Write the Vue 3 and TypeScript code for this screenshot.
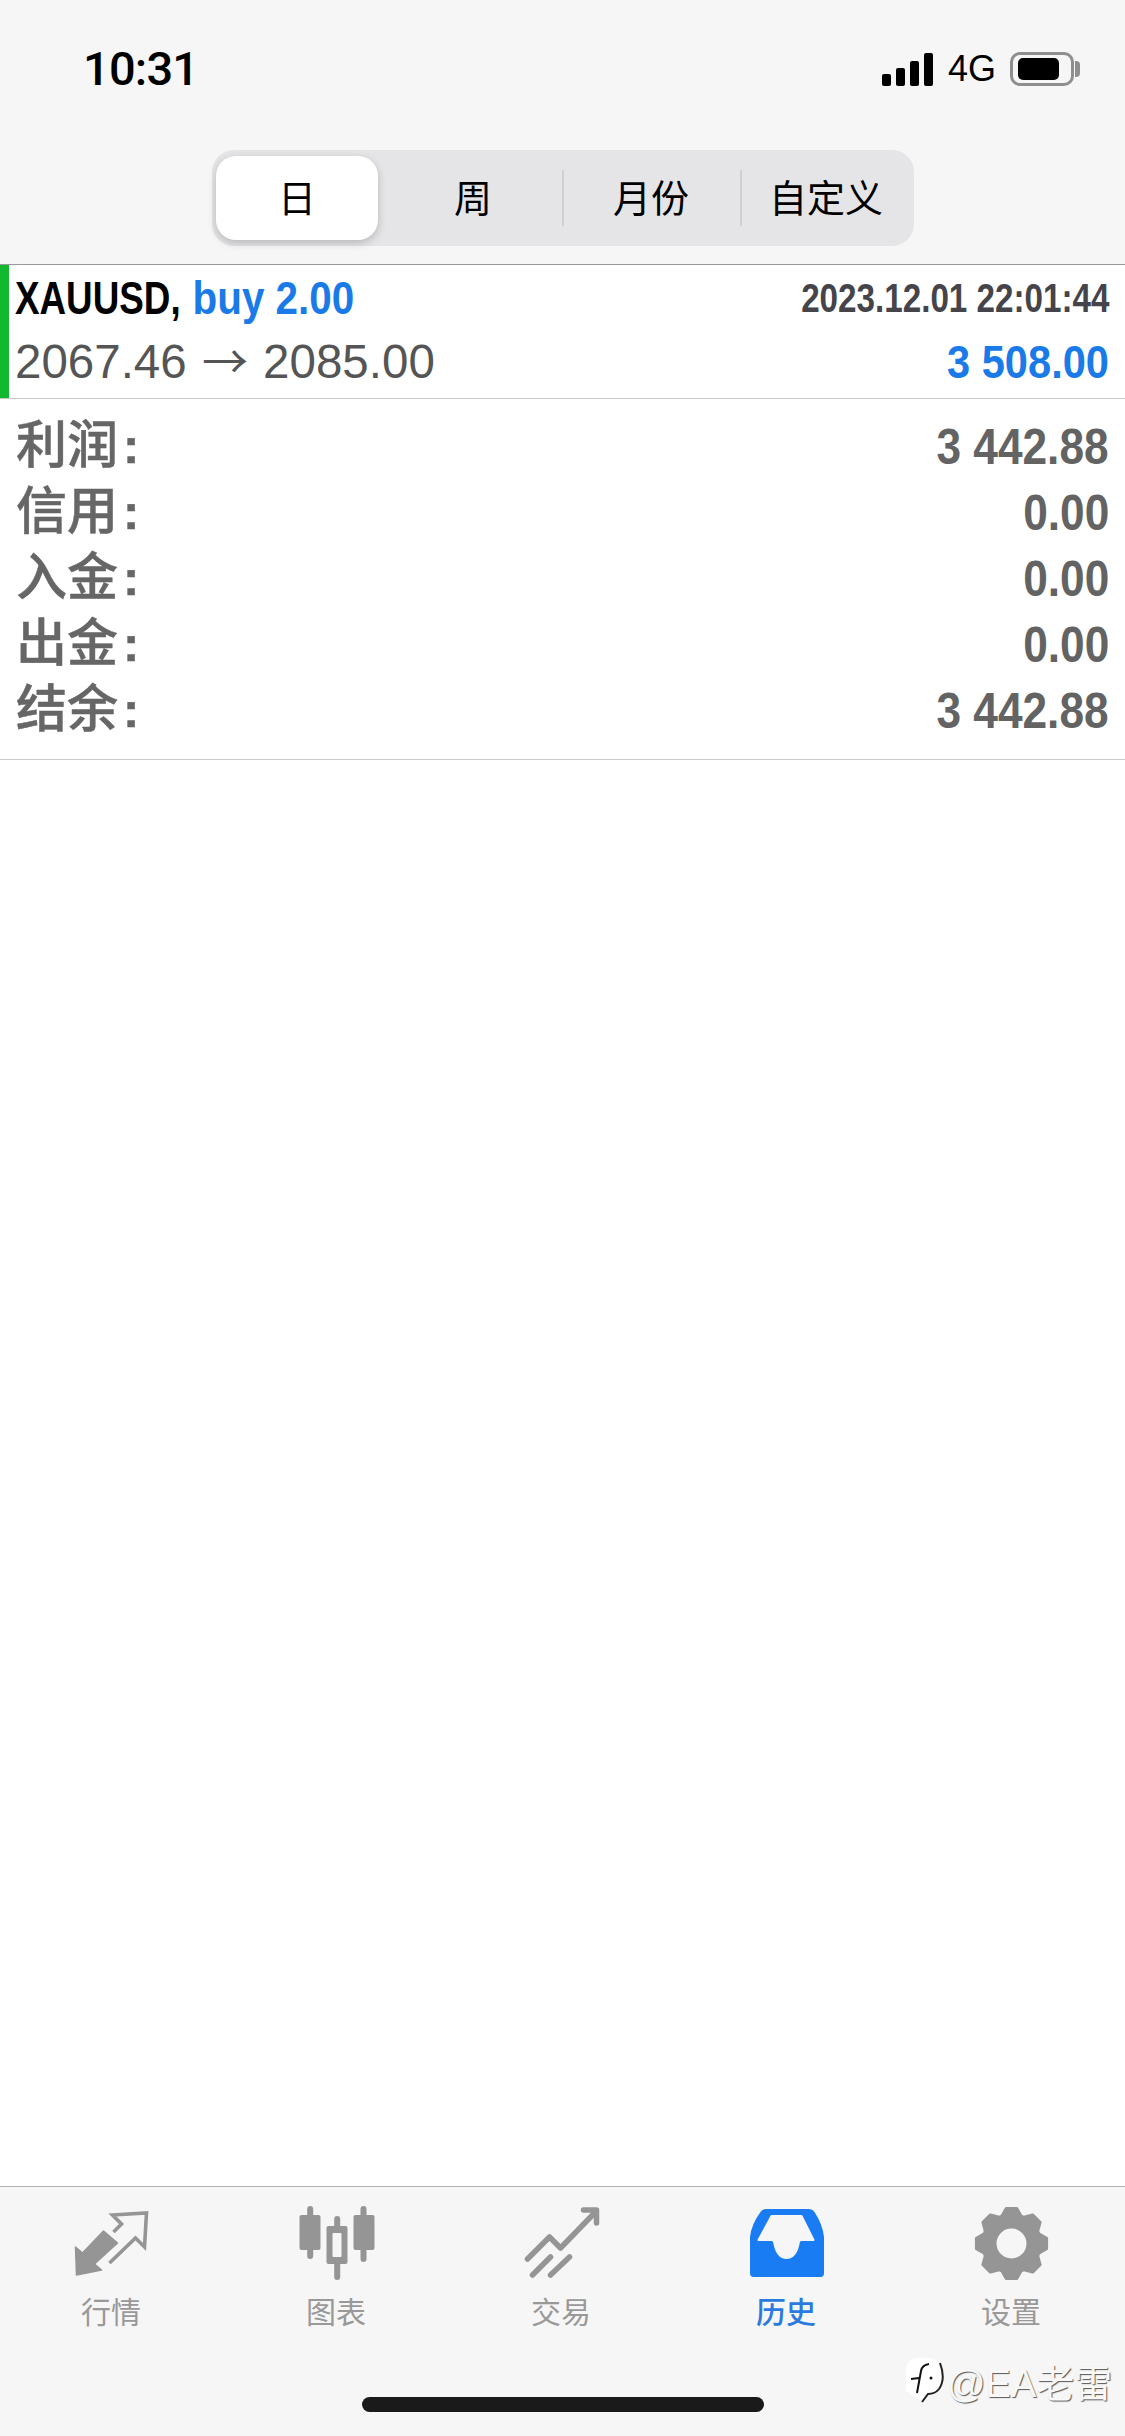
<script setup lang="ts">
const segments = ['日', '周', '月份', '自定义']

const summary = [
  { label: '利润', value: '3 442.88' },
  { label: '信用', value: '0.00' },
  { label: '入金', value: '0.00' },
  { label: '出金', value: '0.00' },
  { label: '结余', value: '3 442.88' },
]

function gearPoints(): string {
  const pts: string[] = []
  for (let i = 0; i < 8; i++) {
    const a = (i * Math.PI) / 4 - Math.PI / 2
    const steps: [number, number][] = [
      [-0.34, 29],
      [-0.15, 35.5],
      [0.15, 35.5],
      [0.34, 29],
    ]
    for (const [off, r] of steps) {
      pts.push(`${(46 + r * Math.cos(a + off)).toFixed(1)},${(43.5 + r * Math.sin(a + off)).toFixed(1)}`)
    }
  }
  return pts.join(' ')
}
</script>

<template>
  <div class="page">
    <header class="top">
      <div class="status">
        <span class="time">10:31</span>
        <div class="status-right">
          <div class="signal">
            <i class="b1"></i>
            <i class="b2"></i>
            <i class="b3"></i>
            <i class="b4"></i>
          </div>
          <span class="net">4G</span>
          <div class="battery">
            <div class="battery-fill"></div>
          </div>
          <div class="battery-nub"></div>
        </div>
      </div>
      <div class="segmented">
        <div
          v-for="(s, i) in segments"
          :key="s"
          class="segment"
          :class="{ active: i === 0, split: i > 1 }"
        >
          {{ s }}
        </div>
      </div>
    </header>

    <main class="content">
      <div class="trade">
        <div class="trade-line first">
          <span class="symbol">XAUUSD, <span class="side">buy 2.00</span></span>
          <span class="date">2023.12.01 22:01:44</span>
        </div>
        <div class="trade-line second">
          <span class="prices">2067.46 <span class="arrow">→</span> 2085.00</span>
          <span class="profit">3 508.00</span>
        </div>
      </div>
      <div class="summary">
        <div v-for="row in summary" :key="row.label" class="summary-row">
          <span class="label">{{ row.label }}<span class="colon">:</span></span>
          <span class="value">{{ row.value }}</span>
        </div>
      </div>
    </main>

    <footer class="tabbar">
      <nav class="tabs">
        <div class="tab">
          <svg class="icon" viewBox="2.5 0 90 85">
            <polygon points="10,47 17,53 38,31 52,43 29,64 36,70 11,75" fill="#959595" stroke="#959595" stroke-width="1.5" stroke-linejoin="round" />
            <polyline points="48,32 56,24 47,15 81,13 79,47 70,38 44,63" fill="none" stroke="#959595" stroke-width="3.6" />
          </svg>
          <span>行情</span>
        </div>
        <div class="tab">
          <svg class="icon" viewBox="2.5 0 90 85">
            <g fill="#959595">
              <rect x="16.7" y="6" width="6" height="53" rx="3" />
              <rect x="9" y="15" width="21" height="35" rx="2" />
              <rect x="43.7" y="16" width="6" height="64" rx="3" />
              <rect x="36" y="26" width="21" height="38" rx="2" />
              <rect x="70" y="6" width="6" height="56" rx="3" />
              <rect x="63" y="15" width="21" height="35" rx="2" />
            </g>
            <rect x="42" y="33" width="9" height="24" rx="1" fill="#f6f6f6" />
          </svg>
          <span>图表</span>
        </div>
        <div class="tab">
          <svg class="icon" viewBox="2.5 0 90 85">
            <g fill="none" stroke="#959595" stroke-width="5.5" stroke-linecap="round" stroke-linejoin="round">
              <polyline points="12,59 34,37 45,48 79,13" />
              <polyline points="68,10 81,10 81,23" />
              <line x1="17" y1="75" x2="35" y2="57" />
              <line x1="35" y1="75" x2="54" y2="57" />
            </g>
          </svg>
          <span>交易</span>
        </div>
        <div class="tab current">
          <svg class="icon" viewBox="2.5 0 90 85">
            <path
              fill="#1a7cf2"
              d="M26 9H68Q72 9 74 12Q82 24 83.500 37V73Q83.500 77 80 77H13Q9.500 77 9.500 73V37Q11 24 20 12Q22 9 26 9Z"
            />
            <path
              fill="#f6f6f6"
              stroke="#f6f6f6"
              stroke-width="2"
              stroke-linejoin="round"
              d="M31 16H61L73 40H60Q58 41 58 44Q55 58 46 58Q37 58 34 44Q34 41 32 40H18Z"
            />
          </svg>
          <span>历史</span>
        </div>
        <div class="tab">
          <svg class="icon" viewBox="2.5 0 90 85">
            <polygon :points="gearPoints()" fill="#959595" stroke="#959595" stroke-width="3" stroke-linejoin="round" />
            <circle cx="46" cy="43.500" r="15" fill="#f6f6f6" />
          </svg>
          <span>设置</span>
        </div>
      </nav>
      <div class="home-indicator"></div>
      <div class="watermark">
        <svg class="wm-logo" viewBox="0 0 42 48">
          <path d="M3 14Q3 2 15 1H26Q40 3 40 22Q39 36 27 36L19 44L3 34Z" fill="#fff" />
          <path d="M37 6Q43 22 36 32Q32 37 25 37L19 45" fill="none" stroke="#222" stroke-width="2" />
          <path d="M14 36L18 14Q19 8 26 7M8 22L16 21" fill="none" stroke="#111" stroke-width="2" />
          <circle cx="28" cy="21" r="1.500" fill="#111" />
        </svg>
        <span>@EA老雷</span>
      </div>
    </footer>
  </div>
</template>

<style scoped>
.page {
  position: relative;
  width: 1125px;
  height: 2436px;
  display: flex;
  flex-direction: column;
  background: #fff;
  font-family: 'Liberation Sans', 'Noto Sans CJK SC', sans-serif;
  overflow: hidden;
}

.top {
  height: 264px;
  background: #f6f6f6;
  padding-top: 43px;
  box-sizing: border-box;
}

.status {
  height: 50px;
  display: flex;
  justify-content: space-between;
  align-items: center;
  padding: 0 45px 0 83px;
}

.time {
  font-family: Roboto, sans-serif;
  font-weight: 500;
  font-size: 47px;
  letter-spacing: -0.8px;
  color: #000;
}

.status-right {
  display: flex;
  align-items: center;
  margin-top: 2px;
}

.signal {
  display: flex;
  align-items: flex-end;
  gap: 5px;
  height: 33px;
}

.signal i {
  display: block;
  width: 9px;
  background: #000;
  border-radius: 2px;
}

.b1 {
  height: 12px;
}

.b2 {
  height: 18px;
}

.b3 {
  height: 25px;
}

.b4 {
  height: 33px;
}

.net {
  margin: 0 14px 0 15px;
  font-size: 36px;
  color: #000;
}

.battery {
  width: 64px;
  height: 34px;
  box-sizing: border-box;
  border: 3px solid #8e8e8e;
  border-radius: 10px;
  padding: 3px 12px 3px 5px;
}

.battery-fill {
  height: 100%;
  background: #000;
  border-radius: 5px;
}

.battery-nub {
  width: 5px;
  height: 16px;
  margin-left: 1px;
  background: #8e8e8e;
  border-radius: 0 4px 4px 0;
}

.segmented {
  display: grid;
  grid-template-columns: 162px 184px 178px 170px;
  width: 702px;
  height: 96px;
  margin: 57px 0 0 212px;
  padding: 6px 4px;
  box-sizing: border-box;
  background: #e5e5e7;
  border-radius: 22px;
}

.segment {
  position: relative;
  display: flex;
  align-items: center;
  justify-content: center;
  padding-bottom: 5px;
  font-size: 38px;
  color: #000;
}

.segment:nth-child(2) {
  padding-left: 6px;
}

.segment:nth-child(4) {
  padding-left: 2px;
}

.segment.active {
  background: #fff;
  border-radius: 20px;
  box-shadow: 0 3px 8px rgba(0, 0, 0, 0.2);
}

.segment.split::before {
  content: '';
  position: absolute;
  left: 0;
  top: 14px;
  bottom: 14px;
  width: 2px;
  background: #cfcfd1;
}

.content {
  flex: 1;
  border-top: 1px solid #999;
}

.trade {
  height: 133px;
  border-left: 9px solid #12b82e;
}

.trade-line {
  display: flex;
  justify-content: space-between;
  align-items: center;
  padding: 0 16px 0 6px;
}

.first {
  height: 66px;
}

.second {
  height: 60px;
}

.symbol {
  display: inline-block;
  transform: scaleX(0.8);
  transform-origin: left center;
  white-space: nowrap;
  font-weight: 700;
  font-size: 46px;
  color: #000;
}

.side {
  display: inline-block;
  margin-left: 2px;
  transform: scaleX(1.097);
  transform-origin: left center;
  color: #1a7ae8;
}

.date {
  display: inline-block;
  transform: scaleX(0.83);
  transform-origin: right center;
  font-weight: 700;
  font-size: 40px;
  color: #44444a;
}

.prices {
  font-size: 47.5px;
  color: #555;
}

.arrow {
  margin: 0 2px;
  font-family: 'Noto Sans CJK SC', sans-serif;
  font-size: 46px;
  line-height: 1;
}

.profit {
  display: inline-block;
  transform: scaleX(0.885);
  transform-origin: right center;
  font-weight: 700;
  font-size: 47px;
  color: #1a7ae8;
}

.summary {
  padding: 15px 16px;
  border-top: 1px solid #c8c8c8;
  border-bottom: 1px solid #ccc;
}

.summary-row {
  display: flex;
  justify-content: space-between;
  align-items: center;
  height: 66px;
  color: #666;
}

.label {
  margin-top: -8px;
  font-family: 'Noto Sans CJK SC', sans-serif;
  font-weight: 500;
  font-size: 51px;
  line-height: 52px;
  -webkit-text-stroke: 0.5px #666;
}

.colon {
  margin-left: 5px;
  font-family: 'Liberation Sans', sans-serif;
  font-weight: 700;
  font-size: 49px;
  line-height: 1;
}

.value {
  display: inline-block;
  transform: scaleX(0.885);
  transform-origin: right center;
  font-weight: 700;
  font-size: 50px;
  color: #636363;
}

.tabbar {
  position: relative;
  height: 250px;
  box-sizing: border-box;
  background: #f6f6f6;
  border-top: 1px solid #b2b2b2;
  padding-top: 13px;
}

.tabs {
  display: grid;
  grid-template-columns: repeat(5, 1fr);
}

.tab {
  display: flex;
  flex-direction: column;
  align-items: center;
  font-family: 'Noto Sans CJK SC', sans-serif;
  font-size: 30px;
  line-height: 40px;
  color: #999;
}

.tab span {
  margin-right: 3px;
}

.tab.current {
  color: #2a7ae0;
  font-weight: 500;
}

.icon {
  display: block;
  width: 90px;
  height: 85px;
  margin-bottom: 5px;
}

.home-indicator {
  width: 402px;
  height: 15px;
  margin: 67px auto 0;
  background: #1a1a1a;
  border-radius: 8px;
}

.watermark {
  position: absolute;
  left: 903px;
  top: 166px;
  display: flex;
  align-items: center;
  gap: 2px;
  font-size: 38px;
  color: #f8f8f8;
  text-shadow: 1px 1px 1px rgba(0, 0, 0, 0.65);
}

.wm-logo {
  width: 42px;
  height: 48px;
}
</style>
